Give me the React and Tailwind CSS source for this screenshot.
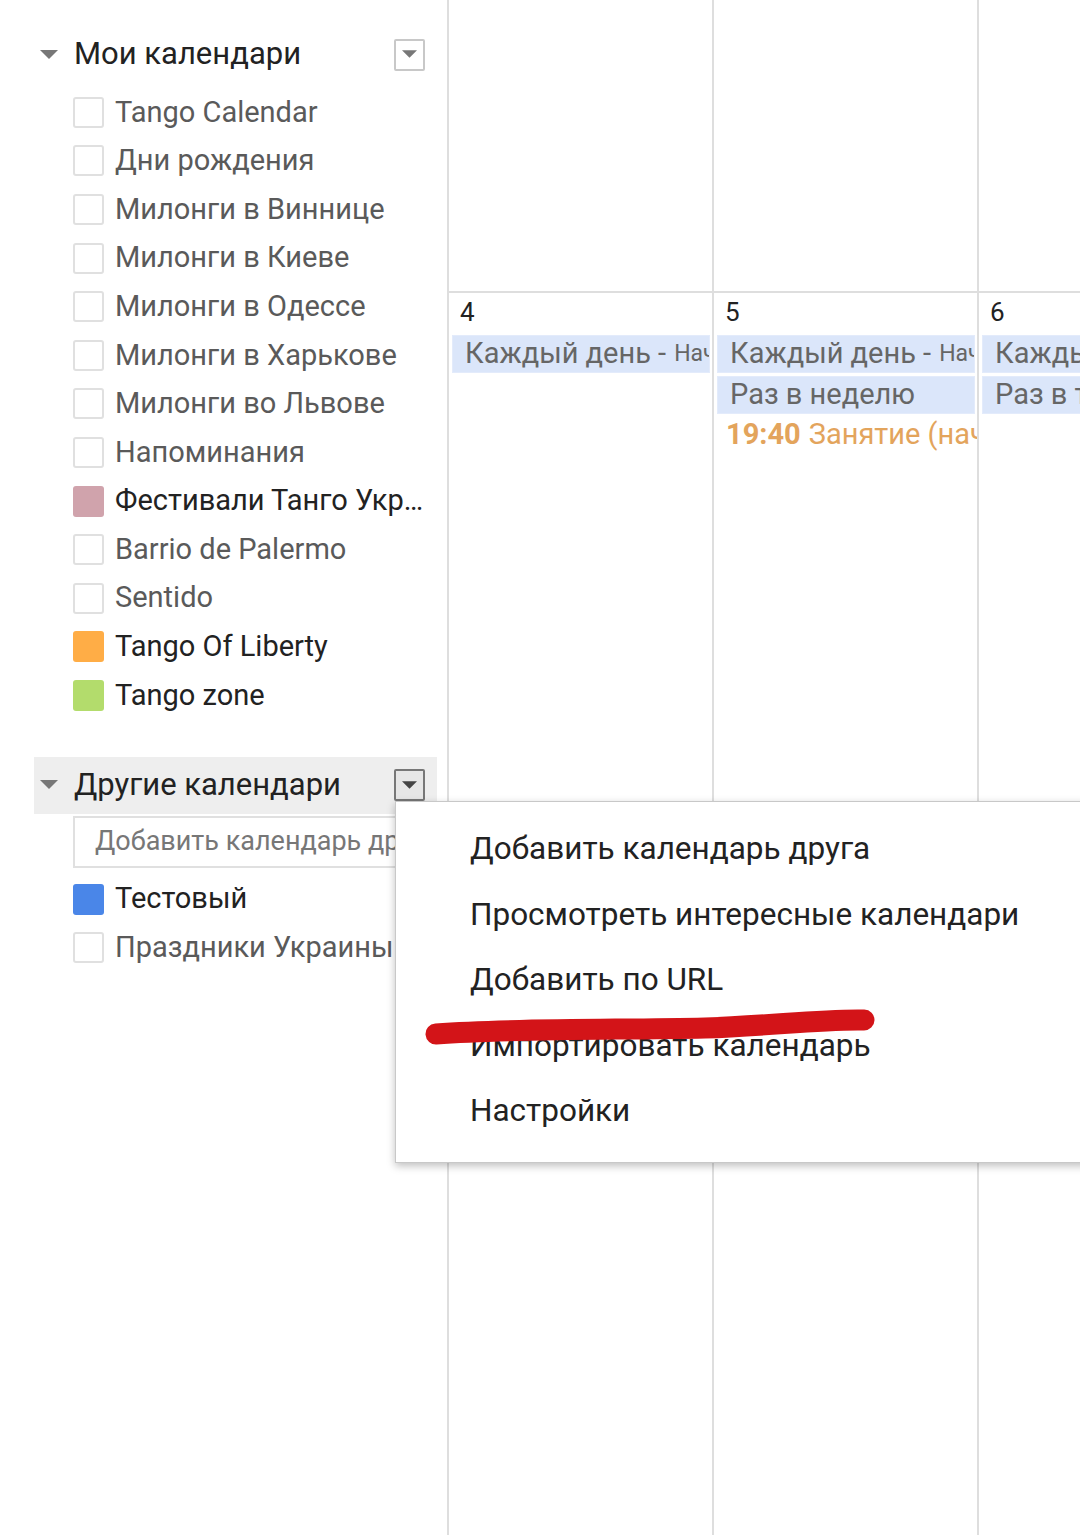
import React from 'react';

const myCalendars = [
  { name: 'Tango Calendar' },
  { name: 'Дни рождения' },
  { name: 'Милонги в Виннице' },
  { name: 'Милонги в Киеве' },
  { name: 'Милонги в Одессе' },
  { name: 'Милонги в Харькове' },
  { name: 'Милонги во Львове' },
  { name: 'Напоминания' },
  { name: 'Фестивали Танго Украины', color: 'bg-[#d0a3ac]' },
  { name: 'Barrio de Palermo' },
  { name: 'Sentido' },
  { name: 'Tango Of Liberty', color: 'bg-[#ffad46]' },
  { name: 'Tango zone', color: 'bg-[#b3dc6c]' },
];

const otherCalendars = [
  { name: 'Тестовый', color: 'bg-[#4a86e8]' },
  { name: 'Праздники Украины' },
];

const menuItems = [
  'Добавить календарь друга',
  'Просмотреть интересные календари',
  'Добавить по URL',
  'Импортировать календарь',
  'Настройки',
];

const Triangle = ({ className }) => (
  <svg width="18" height="10" viewBox="0 0 18 10" className={className}>
    <path d="M0 0 L18 0 L9 9 Z" fill="currentColor" />
  </svg>
);

const CalendarRow = ({ item }) => (
  <div className="flex items-center h-[48.6px] pl-[39px]">
    {item.color ? (
      <div className={`w-[31px] h-[31px] rounded-[3px] shrink-0 ${item.color}`}></div>
    ) : (
      <div className="w-[31px] h-[31px] rounded-[3px] shrink-0 border-2 border-[#e0e0e0] bg-white"></div>
    )}
    <span className={`ml-[11px] text-[29px] truncate ${item.color ? 'text-[#222]' : 'text-[#5a5a5a]'}`}>
      {item.name}
    </span>
  </div>
);

const SectionHeader = ({ title, active }) => (
  <div className={`flex items-center h-[57px] pl-[6px] pr-[12px] ${active ? 'bg-[#eeeeee]' : ''}`}>
    <Triangle className="text-[#777] w-[18px]" />
    <span className="ml-[16px] text-[31px] text-[#222] flex-1">{title}</span>
    <div
      className={`w-[31px] h-[32px] rounded-[2px] border-2 flex items-center justify-center ${
        active ? 'border-[#777] bg-[#e6e6e6] text-[#444]' : 'border-[#c8c8c8] bg-white text-[#777]'
      }`}
    >
      <Triangle className="w-[15px] h-[9px]" />
    </div>
  </div>
);

const EventBar = ({ children }) => (
  <div className="mt-[3px] ml-[3px] mr-[2px] h-[38px] bg-[#dbe6fa] border border-[#e3ebfb] flex items-center pl-[12px] overflow-hidden whitespace-nowrap text-[29px] text-[#666]">
    {children}
  </div>
);

const DayColumn = ({ day, events }) => (
  <div className="w-[265px] shrink-0 border-l-2 border-[#dedede] flex flex-col">
    <div className="h-[291px]"></div>
    <div className="h-[510px] border-t-2 border-[#dedede] overflow-hidden">
      <div className="pl-[11px] pt-[2px] h-[39px] text-[26px] leading-[34px] text-[#222]">{day}</div>
      {events}
    </div>
    <div className="flex-1 border-t-2 border-[#dedede]"></div>
  </div>
);

export default function App() {
  return (
    <div className="relative flex w-[1080px] h-[1535px] overflow-hidden bg-white font-['Roboto',sans-serif]">
      <div className="w-[447px] shrink-0 pt-[26px] pl-[34px] pr-[10px]">
        <SectionHeader title="Мои календари" />
        <div className="mt-[5px]">
          {myCalendars.map((c) => (
            <CalendarRow key={c.name} item={c} />
          ))}
        </div>
        <div className="mt-[37px]">
          <SectionHeader title="Другие календари" active />
        </div>
        <div className="ml-[39px] mt-[2px] h-[52px] border-2 border-[#e0e0e0] flex items-center pl-[20px] text-[27px] text-[#777] whitespace-nowrap overflow-hidden">
          Добавить календарь друга
        </div>
        <div className="mt-[7px]">
          {otherCalendars.map((c) => (
            <CalendarRow key={c.name} item={c} />
          ))}
        </div>
      </div>

      <div className="flex-1 flex overflow-hidden">
        <DayColumn
          day="4"
          events={
            <EventBar>
              Каждый день -<span className="ml-[8px] text-[23px]">Начало</span>
            </EventBar>
          }
        />
        <DayColumn
          day="5"
          events={
            <>
              <EventBar>
                Каждый день -<span className="ml-[8px] text-[23px]">Начало</span>
              </EventBar>
              <EventBar>Раз в неделю</EventBar>
              <div className="ml-[12px] h-[42px] flex items-center whitespace-nowrap overflow-hidden text-[29px] text-[#e3a45c]">
                <span className="font-bold">19:40</span>
                <span className="ml-[8px]">Занятие (начинающие)</span>
              </div>
            </>
          }
        />
        <DayColumn
          day="6"
          events={
            <>
              <EventBar>Каждый день</EventBar>
              <EventBar>Раз в три дня</EventBar>
            </>
          }
        />
      </div>

      {/* dropdown menu */}
      <div className="absolute left-[395px] top-[801px] w-[700px] h-[362px] bg-white border border-[#c8c8c8] shadow-[0_3px_8px_rgba(0,0,0,0.25)] pt-[14px]">
        {menuItems.map((m) => (
          <div key={m} className="h-[65.5px] flex items-center pl-[74px] text-[31.5px] text-[#222]">
            {m}
          </div>
        ))}
      </div>

      {/* red marker scribble */}
      <svg className="absolute left-0 top-0 pointer-events-none" width="1080" height="1535">
        <path
          d="M436 1034 C 520 1028, 620 1030, 705 1028 C 770 1026, 820 1019, 864 1020"
          stroke="#d31418"
          strokeWidth="21"
          strokeLinecap="round"
          fill="none"
        />
      </svg>
    </div>
  );
}
